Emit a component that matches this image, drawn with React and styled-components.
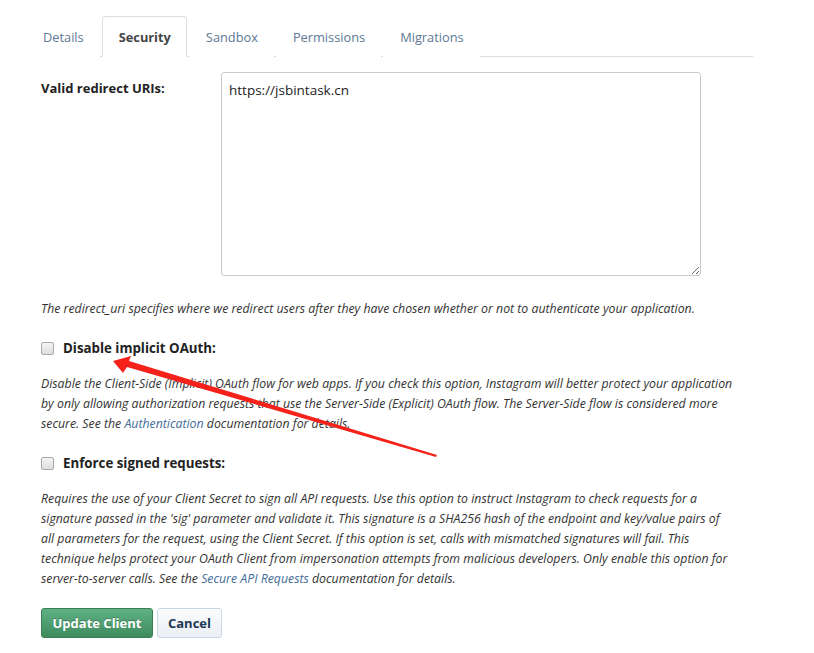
import React from 'react';
import styled, { createGlobalStyle } from 'styled-components';

const GlobalStyle = createGlobalStyle`
  body {
    margin: 0;
    background: #fff;
    font-family: "Open Sans", "Noto Sans", sans-serif;
    color: #333;
  }
`;

const Page = styled.div`
  position: relative;
  width: 814px;
  height: 653px;
  padding: 16px 0 0 26px;
  box-sizing: border-box;
  overflow: hidden;
`;

const Tabs = styled.ul`
  display: flex;
  list-style: none;
  margin: 0;
  padding: 0;
  width: 727px;
  border-bottom: 1px solid #dddddd;
`;

const Tab = styled.li`
  margin: 0 2px -1px 0;
  padding: 0 15px 0 16px;
  height: 41px;
  line-height: 41px;
  font-size: 12.8px;
  border: 1px solid ${p => (p.active ? '#dddddd' : 'transparent')};
  border-bottom-color: ${p => (p.active ? '#fff' : 'transparent')};
  border-radius: 4px 4px 0 0;
  background: #fff;
  color: ${p => (p.active ? '#444' : '#5e7895')};
  font-weight: ${p => (p.active ? 700 : 400)};
  box-sizing: border-box;
`;

const Body = styled.div`
  padding: 15px 0 0 15px;
  width: 713px;
`;

const FieldRow = styled.div`
  display: flex;
`;

const FieldLabel = styled.label`
  width: 180px;
  flex: none;
  padding-top: 7px;
  font-size: 13px;
  font-weight: 700;
  color: #222;
`;

const TextArea = styled.textarea`
  width: 480px;
  height: 204px;
  box-sizing: border-box;
  border: 1px solid #c9c9c9;
  border-radius: 3px;
  padding: 8px 7px;
  font-family: "Open Sans", "Noto Sans", sans-serif;
  font-size: 13.5px;
  color: #222;
  resize: vertical;
  outline: none;
`;

const Help = styled.p`
  margin: ${p => p.margin || '0'};
  font-size: 12.3px;
  font-style: italic;
  line-height: 20px;
  color: #333;
  white-space: nowrap;
`;

const CheckRow = styled.label`
  display: flex;
  align-items: center;
  gap: 9px;
  margin-top: 20px;
  font-size: 13.3px;
  font-weight: 700;
  color: #222;
`;

const Box = styled.span`
  display: inline-block;
  width: 11px;
  height: 11px;
  border: 1px solid #a9a9a9;
  border-radius: 2px;
  background: linear-gradient(#f4f4f4, #dedede);
`;

const Link = styled.a`
  color: #3f6c98;
  text-decoration: none;
`;

const Actions = styled.div`
  display: flex;
  gap: 4px;
  margin-top: 19px;
`;

const Button = styled.button`
  height: 30px;
  padding: 0;
  border-radius: 3px;
  font-family: "Open Sans", "Noto Sans", sans-serif;
  font-size: 13px;
  font-weight: 700;
  white-space: nowrap;
  box-sizing: border-box;
  cursor: pointer;
  ${p =>
    p.primary
      ? `
    background: linear-gradient(#5fb184, #3f8b5e);
    border: 1px solid #3b7f55;
    color: #fff;
    text-shadow: 0 -1px 0 rgba(0,0,0,0.25);
    width: 112px;
  `
      : `
    background: linear-gradient(#fbfcfd, #eaeff4);
    border: 1px solid #c8d8e8;
    color: #1d3854;
    width: 65px;
  `}
`;

const Arrow = styled.svg`
  position: absolute;
  left: 0;
  top: 0;
  pointer-events: none;
`;

export default function App() {
  return (
    <>
      <GlobalStyle />
      <Page>
        <Tabs>
          <Tab>Details</Tab>
          <Tab active>Security</Tab>
          <Tab>Sandbox</Tab>
          <Tab>Permissions</Tab>
          <Tab>Migrations</Tab>
        </Tabs>
        <Body>
          <FieldRow>
            <FieldLabel>Valid redirect URIs:</FieldLabel>
            <TextArea defaultValue="https://jsbintask.cn" />
          </FieldRow>
          <Help margin="23px 0 0">
            The redirect_uri specifies where we redirect users after they have chosen whether or not to authenticate your application.
          </Help>
          <CheckRow>
            <Box />
            Disable implicit OAuth:
          </CheckRow>
          <Help margin="17px 0 0">
            Disable the Client-Side (Implicit) OAuth flow for web apps. If you check this option, Instagram will better protect your application
            <br />
            by only allowing authorization requests that use the Server-Side (Explicit) OAuth flow. The Server-Side flow is considered more
            <br />
            secure. See the <Link>Authentication</Link> documentation for details.
          </Help>
          <CheckRow>
            <Box />
            Enforce signed requests:
          </CheckRow>
          <Help margin="17px 0 0">
            Requires the use of your Client Secret to sign all API requests. Use this option to instruct Instagram to check requests for a
            <br />
            signature passed in the 'sig' parameter and validate it. This signature is a SHA256 hash of the endpoint and key/value pairs of
            <br />
            all parameters for the request, using the Client Secret. If this option is set, calls with mismatched signatures will fail. This
            <br />
            technique helps protect your OAuth Client from impersonation attempts from malicious developers. Only enable this option for
            <br />
            server-to-server calls. See the <Link>Secure API Requests</Link> documentation for details.
          </Help>
          <Actions>
            <Button primary>Update Client</Button>
            <Button>Cancel</Button>
          </Actions>
        </Body>
        <Arrow width="814" height="653" viewBox="0 0 814 653">
          <polygon
            fill="#f5221b"
            points="113,361 131,356 129,361 437,455 436,457 127,367 123,373"
          />
        </Arrow>
      </Page>
    </>
  );
}
